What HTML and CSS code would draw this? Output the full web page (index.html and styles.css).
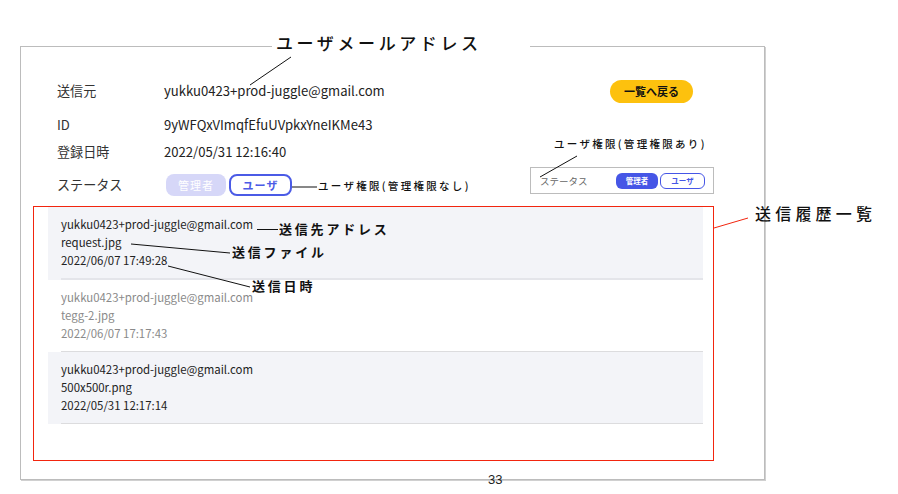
FILE: index.html
```html
<!DOCTYPE html>
<html lang="ja">
<head>
  <meta charset="UTF-8">
  <meta name="viewport" content="width=device-width, initial-scale=1.0">
  <title>ユーザ詳細</title>
  <link rel="stylesheet" href="styles.css">
</head>
<body>
  <div class="slide">
    <div class="frame">
      <div class="info">
        <div class="info__row info__row--first">
          <span class="info__label">送信元</span>
          <span class="info__value">yukku0423+prod-juggle@gmail.com</span>
          <button class="back-button" type="button">一覧へ戻る</button>
        </div>
        <div class="info__row info__row--id">
          <span class="info__label">ID</span>
          <span class="info__value">9yWFQxVImqfEfuUVpkxYneIKMe43</span>
        </div>
        <div class="info__row info__row--date">
          <span class="info__label">登録日時</span>
          <span class="info__value">2022/05/31 12:16:40</span>
        </div>
        <div class="info__row info__row--status">
          <span class="info__label">ステータス</span>
          <span class="status">
            <span class="badge badge--off">管理者</span>
            <span class="badge badge--on">ユーザ</span>
          </span>
        </div>
      </div>

      <div class="history">
        <ul class="history__list">
          <li class="history__item history__item--shaded">
            <div class="history__body">
              <div>yukku0423+prod-juggle@gmail.com</div>
              <div>request.jpg</div>
              <div>2022/06/07 17:49:28</div>
            </div>
          </li>
          <li class="history__item history__item--muted">
            <div class="history__body">
              <div>yukku0423+prod-juggle@gmail.com</div>
              <div>tegg-2.jpg</div>
              <div>2022/06/07 17:17:43</div>
            </div>
          </li>
          <li class="history__item history__item--shaded">
            <div class="history__body">
              <div>yukku0423+prod-juggle@gmail.com</div>
              <div>500x500r.png</div>
              <div>2022/05/31 12:17:14</div>
            </div>
          </li>
        </ul>
      </div>
    </div>

    <!-- annotations -->
    <div class="note note--title">ユーザメールアドレス</div>
    <div class="note note--small note--nonadmin">ユーザ権限(管理権限なし)</div>
    <div class="note note--small note--admin">ユーザ権限(管理権限あり)</div>
    <div class="note note--list">送信履歴一覧</div>
    <div class="note note--mid note--to">送信先アドレス</div>
    <div class="note note--mid note--file">送信ファイル</div>
    <div class="note note--mid note--sent">送信日時</div>

    <div class="mini-status">
      <span class="mini-status__label">ステータス</span>
      <span class="mini-status__badges">
        <span class="mini-badge mini-badge--on">管理者</span>
        <span class="mini-badge mini-badge--off">ユーザ</span>
      </span>
    </div>

    <svg class="leaders" width="898" height="494" viewBox="0 0 898 494">
      <g stroke="#111" stroke-width="1" fill="none">
        <line x1="291" y1="57" x2="250" y2="85"/>
        <line x1="292" y1="187" x2="317" y2="187"/>
        <line x1="577" y1="156" x2="540" y2="177"/>
        <line x1="257" y1="229.5" x2="278" y2="229.5"/>
        <line x1="131" y1="244" x2="230" y2="253"/>
        <line x1="168" y1="266" x2="250" y2="287"/>
      </g>
      <line x1="714" y1="228" x2="748" y2="218" stroke="#f2250e" stroke-width="1"/>
    </svg>

    <div class="page-number">33</div>
  </div>
</body>
</html>
```

FILE: styles.css
```css
* {
  box-sizing: border-box;
}

body {
  margin: 0;
  background-color: #fff;
  font-family: "Noto Sans CJK JP", "Noto Sans", sans-serif;
  color: #222;
}

.slide {
  position: relative;
  width: 898px;
  height: 494px;
  padding: 46px 0 0 20px;
  overflow: hidden;
}

.frame {
  width: 745px;
  height: 434px;
  border: 1px solid #bcbcbc;
  box-shadow: 1px 1px 0 #d0d0d0;
}

/* detail rows */
.info {
  padding: 31px 71px 0 36px;
}

.info__row {
  display: flex;
  align-items: center;
  height: 24px;
  font-size: 13.1px;
}

.info__row--first .back-button {
  margin-top: 2px;
}

.info__row--id {
  margin-top: 10px;
}

.info__row--date {
  margin-top: 3px;
}

.info__row--status {
  margin-top: 9px;
}

.info__label {
  width: 107px;
  color: #333;
}

.info__value {
  color: #222;
}

.back-button {
  margin-left: auto;
  width: 83px;
  height: 23px;
  border: none;
  border-radius: 12px;
  background-color: #fdc10e;
  color: #111;
  font-family: inherit;
  font-size: 11px;
  font-weight: 700;
  padding: 0;
  cursor: pointer;
}

.status {
  display: flex;
  gap: 3px;
  margin-left: 2px;
  margin-top: 2px;
}

.badge {
  display: inline-flex;
  justify-content: center;
  align-items: center;
  height: 22px;
  border-radius: 8px;
  font-size: 11px;
  letter-spacing: 1px;
}

.badge--off {
  width: 60px;
  background-color: #d6d7f8;
  color: #fff;
}

.badge--on {
  width: 63px;
  border: 2px solid #4b5be6;
  color: #4b5be6;
  background-color: #fff;
  font-weight: 700;
}

/* history list */
.history {
  margin: 10px 0 0 12px;
  width: 681px;
  height: 255px;
  border: 1px solid #f2250e;
  padding: 0 10px 0 14px;
}

.history__list {
  list-style: none;
  margin: 0;
  padding: 0;
}

.history__item {
  padding-left: 13px;
}

.history__item--shaded {
  background-color: #f3f4f8;
}

.history__body {
  padding: 8px 0 9px;
  border-bottom: 1px solid #dcdcde;
  font-size: 11.4px;
  line-height: 18px;
  color: #222;
}

.history__item:first-child .history__body {
  border-bottom: 2px solid #e4e5ea;
}

.history__item--muted .history__body {
  color: #8a8a8a;
}

/* annotations */
.note {
  position: absolute;
  color: #111;
  white-space: nowrap;
  line-height: 1;
}

.note--title {
  left: 272px;
  top: 34px;
  width: 258px;
  padding-left: 4px;
  background-color: #fff;
  font-size: 17px;
  font-weight: 500;
  letter-spacing: 3.6px;
}

.note--small {
  font-size: 10.5px;
  font-weight: 500;
  letter-spacing: 2.3px;
}

.note--nonadmin {
  left: 318px;
  top: 181px;
}

.note--admin {
  left: 554px;
  top: 139px;
}

.note--list {
  left: 755px;
  top: 205px;
  font-size: 16px;
  font-weight: 500;
  letter-spacing: 4.2px;
}

.note--mid {
  font-size: 13px;
  font-weight: 700;
  letter-spacing: 2.8px;
}

.note--to {
  left: 279px;
  top: 222px;
}

.note--file {
  left: 232px;
  top: 245px;
}

.note--sent {
  left: 252px;
  top: 279px;
}

.mini-status {
  position: absolute;
  left: 530px;
  top: 167px;
  width: 184px;
  height: 27px;
  border: 1px solid #bcbcbc;
  display: flex;
  align-items: center;
  padding: 0 8px 0 9px;
}

.mini-status__label {
  font-size: 9.5px;
  color: #666;
}

.mini-status__badges {
  margin-left: auto;
  display: flex;
  gap: 2px;
}

.mini-badge {
  display: inline-flex;
  justify-content: center;
  align-items: center;
  height: 16px;
  border-radius: 6px;
  font-size: 7.5px;
  font-weight: 700;
}

.mini-badge--on {
  width: 42px;
  background-color: #4656e6;
  color: #fff;
}

.mini-badge--off {
  width: 45px;
  border: 1.5px solid #4656e6;
  color: #4656e6;
}

.leaders {
  position: absolute;
  left: 0;
  top: 0;
  pointer-events: none;
}

.page-number {
  position: absolute;
  left: 488px;
  top: 472px;
  font-family: "Liberation Sans", Arial, sans-serif;
  font-size: 13px;
  color: #222;
}
```
